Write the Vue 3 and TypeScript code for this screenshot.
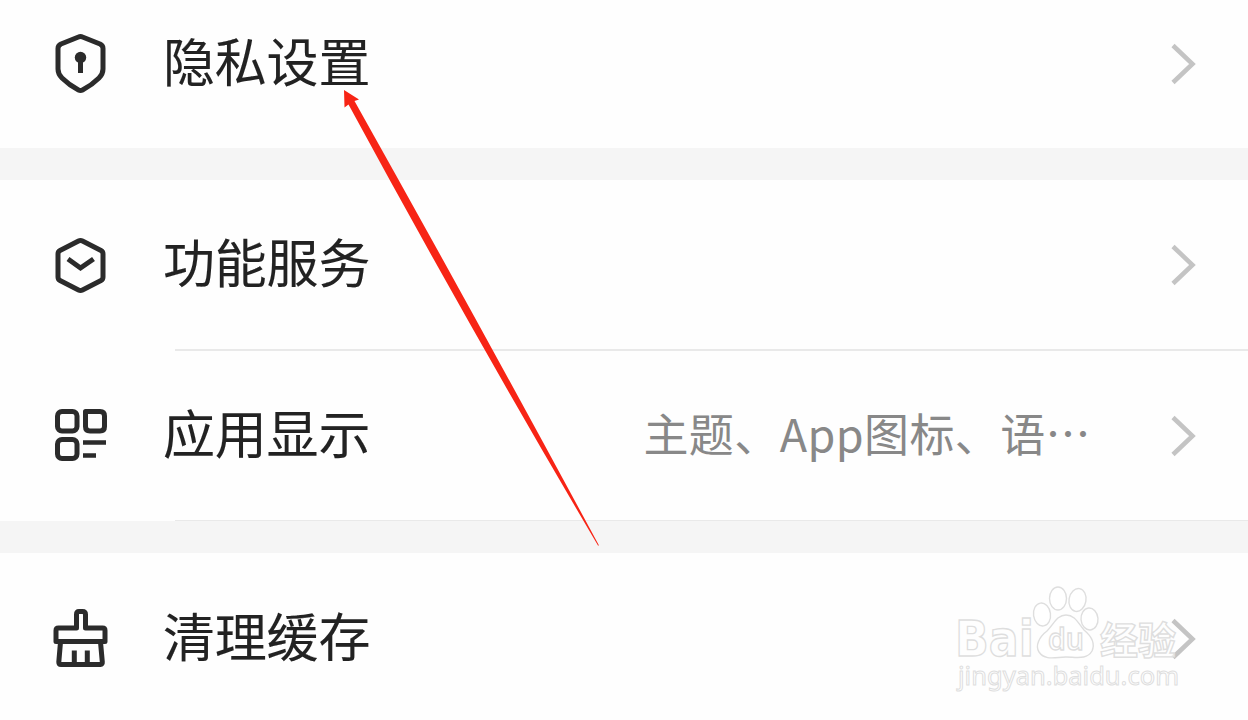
<script setup lang="ts">
interface Row {
  id: string
  label: string
  value?: string
}

const groups: Row[][] = [
  [{ id: 'privacy', label: '隐私设置' }],
  [
    { id: 'service', label: '功能服务' },
    { id: 'display', label: '应用显示', value: '主题、App图标、语…' },
  ],
  [{ id: 'cache', label: '清理缓存' }],
]
</script>

<template>
  <main class="settings">
    <section v-for="(group, index) in groups" :key="index" class="group">
      <div v-for="row in group" :key="row.id" class="row" :class="row.id">
        <svg class="icon" viewBox="0 0 60 64" fill="none" stroke="#2b2b2b" stroke-width="5" stroke-linejoin="round">
          <template v-if="row.id === 'privacy'">
            <path d="M28.500 5 Q30.500 4 32.500 5 L50 12 Q53 13.500 53 16.500 V37 Q53 42 49 46 Q42 53 32.500 58 Q30.500 59 28.500 58 Q19 53 12 46 Q8 42 8 37 V16.500 Q8 13.500 11 12 Z" />
            <circle cx="30.500" cy="25.500" r="5.700" fill="#2b2b2b" stroke="none" />
            <path d="M30.500 26 V41" />
          </template>
          <template v-else-if="row.id === 'service'">
            <path d="M28.500 8 Q30.500 7 32.500 8 L51 17.500 Q53 18.500 53 21 V44 Q53 46.500 51 47.500 L32.500 57 Q30.500 58 28.500 57 L10 47.500 Q8 46.500 8 44 V21 Q8 18.500 10 17.500 Z" />
            <path d="M18 26 L30.500 35 L43.500 26" stroke-linejoin="miter" />
          </template>
          <template v-else-if="row.id === 'display'">
            <rect x="7.500" y="7.500" width="19.500" height="19.500" rx="4.500" />
            <path d="M35.500 7.500 H50 Q54.500 7.500 54.500 12 V22.500 Q54.500 27 50 27 H40 Q35.500 27 35.500 22.500 Z" />
            <rect x="7.500" y="35.500" width="19.500" height="19" rx="4.500" />
            <path d="M33 38.500 H56 M33 51.500 H46" stroke-width="4.500" />
          </template>
          <template v-else>
            <path d="M26.500 21 V7.500 Q26.500 4.500 29 4.500 H32.500 Q35.500 4.500 35.500 7.500 V21 H52.500 Q55 21 55 23.500 V34.500 H6 V23.500 Q6 21 8.500 21 Z" />
            <path d="M10.500 35 L8.800 55 Q8.800 57.500 11 57.500 H50.500 Q52.500 57.500 52.300 55 L50.500 35 M24.300 43.500 V56 M37.300 43.500 V56" />
          </template>
        </svg>
        <span class="label">{{ row.label }}</span>
        <span v-if="row.value" class="value">{{ row.value }}</span>
        <svg class="chevron" viewBox="0 0 26 42" fill="none" stroke="#c4c4c4" stroke-width="4.500">
          <path d="M2 2.500 L21.500 21 L2 39.500" />
        </svg>
      </div>
    </section>

    <svg class="watermark" viewBox="0 0 300 130" fill="#ffffff" fill-opacity=".7" stroke="#dedede" stroke-width="1.400">
      <g class="brand">
        <text x="15" y="81" font-size="49" textLength="79" lengthAdjust="spacingAndGlyphs">Bai</text>
        <ellipse cx="102" cy="39.500" rx="8.500" ry="11.500" transform="rotate(-8 102 39.500)" />
        <ellipse cx="118" cy="23.500" rx="8.500" ry="11.500" />
        <ellipse cx="137.500" cy="25" rx="8.500" ry="11.500" transform="rotate(10 137.500 25)" />
        <ellipse cx="149.500" cy="44" rx="8.500" ry="11" transform="rotate(-5 149.500 44)" />
        <path d="M126 40 C117 40 114 49 107 56 C99 62 95 71 99 77 C105 86 116 82 126 82 C136 82 147 85 152 76 C156 67 150 60 144 55 C138 48 135 40 126 40 Z" />
        <text class="du" x="108" y="75" font-size="30" textLength="36" lengthAdjust="spacingAndGlyphs">du</text>
        <text class="han" x="160" y="79" font-size="38" textLength="76" lengthAdjust="spacingAndGlyphs">经验</text>
      </g>
      <text class="domain" x="18" y="110" font-size="25" textLength="221" lengthAdjust="spacingAndGlyphs">jingyan.baidu.com</text>
    </svg>

    <svg class="arrow" viewBox="0 0 1248 720">
      <path d="M344 90 L359 99.500 L354.500 101 Q479 323 599 545.500 L598 545.500 Q468 325 348.500 104.500 L344.500 107.500 Z" fill="#f72415" />
    </svg>
  </main>
</template>

<style>
body {
  margin: 0;
  overflow: hidden;
}
</style>

<style scoped>
.settings {
  position: relative;
  display: flex;
  flex-direction: column;
  gap: 32px;
  width: 1248px;
  height: 720px;
  overflow: hidden;
  background: #f5f5f5;
  font-family: "Noto Sans CJK SC", sans-serif;
}

.group {
  flex: none;
  background: #fefefe;
}

.row {
  display: flex;
  align-items: center;
  box-sizing: border-box;
  height: 171px;
  padding: 0 51px 0 50px;
}

.privacy {
  height: 148px;
  padding-bottom: 21px;
}

.service,
.display {
  border-bottom: 2px solid;
  border-image: linear-gradient(to right, transparent 176px, #e9e9e9 176px) 1;
}

.display {
  height: 170px;
  border-bottom-width: 1px;
}

.icon {
  flex: none;
  width: 60px;
  height: 64px;
}

.label {
  margin-left: 53px;
  padding-bottom: 7px;
  color: #222;
  font-size: 52px;
  line-height: 76px;
  letter-spacing: -0.2px;
  white-space: nowrap;
  -webkit-text-stroke: 0.1px #222;
}

.value {
  margin-left: auto;
  margin-right: 80px;
  padding-bottom: 6px;
  color: #888;
  font-size: 45px;
  line-height: 66px;
  letter-spacing: 0.4px;
  white-space: nowrap;
}

.chevron {
  flex: none;
  width: 26px;
  height: 42px;
  margin-left: auto;
}

.value + .chevron {
  margin-left: 0;
}

.watermark {
  position: absolute;
  left: 940px;
  top: 575px;
  width: 300px;
  height: 130px;
}

.brand {
  font-family: "DejaVu Sans", sans-serif;
  font-weight: 700;
}

.du {
  font-family: "Open Sans", sans-serif;
  font-weight: 600;
}

.han {
  font-family: "Noto Sans CJK SC", sans-serif;
}

.domain {
  font-family: "Noto Sans", sans-serif;
  font-weight: 400;
  stroke-width: 1;
}

.arrow {
  position: absolute;
  inset: 0;
  width: 1248px;
  height: 720px;
}
</style>
